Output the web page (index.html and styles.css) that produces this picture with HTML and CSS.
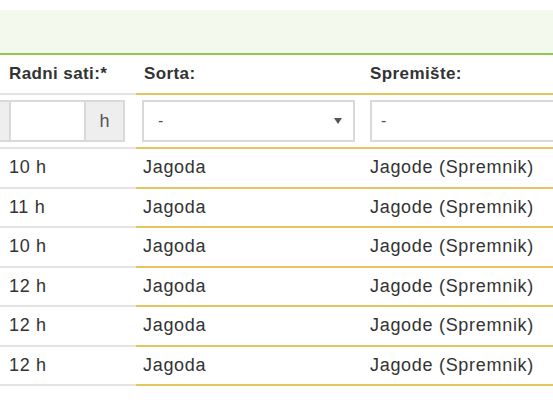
FILE: index.html
```html
<!DOCTYPE html>
<html>
<head>
<meta charset="utf-8">
<link rel="stylesheet" href="styles.css">
</head>
<body>
<div class="band"></div>
<div class="grid">
  <div class="cell c1 head">Radni sati:*</div>
  <div class="cell c2 head">Sorta:</div>
  <div class="cell c3 head">Spremište:</div>

  <div class="cell c1 inrow">
    <div class="group">
      <span class="addon left"></span>
      <span class="field"></span>
      <span class="addon unit">h</span>
    </div>
  </div>
  <div class="cell c2 inrow">
    <div class="select"><span>-</span><span class="caret"></span></div>
  </div>
  <div class="cell c3 inrow">
    <div class="text-input"><span>-</span></div>
  </div>

  <div class="cell c1 data">10 h</div><div class="cell c2 data">Jagoda</div><div class="cell c3 data">Jagode (Spremnik)</div>
  <div class="cell c1 data">11 h</div><div class="cell c2 data">Jagoda</div><div class="cell c3 data">Jagode (Spremnik)</div>
  <div class="cell c1 data">10 h</div><div class="cell c2 data">Jagoda</div><div class="cell c3 data">Jagode (Spremnik)</div>
  <div class="cell c1 data">12 h</div><div class="cell c2 data">Jagoda</div><div class="cell c3 data">Jagode (Spremnik)</div>
  <div class="cell c1 data">12 h</div><div class="cell c2 data">Jagoda</div><div class="cell c3 data">Jagode (Spremnik)</div>
  <div class="cell c1 data">12 h</div><div class="cell c2 data">Jagoda</div><div class="cell c3 data">Jagode (Spremnik)</div>
</div>
</body>
</html>
```

FILE: styles.css
```css
html, body {
  margin: 0;
  padding: 0;
  background: #ffffff;
  overflow: hidden;
}
body {
  font-family: "Liberation Sans", Arial, sans-serif;
  color: #333333;
  width: 553px;
  height: 400px;
}
.band {
  margin-top: 10px;
  height: 43px;
  background: #f3f9ec;
  border-bottom: 2px solid #8fca4c;
}
.grid {
  display: grid;
  grid-template-columns: 136px 226px 191px;
  width: 553px;
}
.cell {
  display: flex;
  align-items: center;
  border-bottom: 2px solid #e6c65c;
  overflow: hidden;
  white-space: nowrap;
}
.c1 {
  border-bottom-color: #e4e4e4;
  padding-left: 9px;
}
.c2 {
  padding-left: 7px;
}
.c3 {
  padding-left: 8px;
}
.head {
  height: 38px;
  font-weight: bold;
  font-size: 17px;
  letter-spacing: 0.4px;
}
.inrow {
  height: 52px;
}
.data {
  height: 37.5px;
  font-size: 18px;
  letter-spacing: 0.7px;
}
.c2.head { padding-left: 8px; }
.c2.data { padding-left: 7px; }

.group {
  display: flex;
  height: 42px;
  margin-left: -20px;
}
.addon {
  box-sizing: border-box;
  background: #eeeeee;
  border: 2px solid #d9d9d9;
  display: flex;
  align-items: center;
  justify-content: center;
  font-size: 18px;
  color: #555555;
}
.addon.left {
  width: 22px;
}
.field {
  box-sizing: border-box;
  width: 73px;
  border: 2px solid #d9d9d9;
  border-left: none;
  border-right: none;
  background: #ffffff;
}
.addon.unit {
  width: 41px;
}
.inrow.c2 { padding-left: 6px; }
.select {
  box-sizing: border-box;
  width: 213px;
  height: 42px;
  border: 2px solid #d9d9d9;
  display: flex;
  align-items: center;
  justify-content: space-between;
  padding: 0 11px 0 14px;
  font-size: 16px;
  color: #555555;
}
.caret {
  width: 0;
  height: 0;
  border-left: 4px solid transparent;
  border-right: 4px solid transparent;
  border-top: 6px solid #555555;
}
.text-input {
  box-sizing: border-box;
  width: 240px;
  height: 42px;
  border: 2px solid #d9d9d9;
  border-right: none;
  display: flex;
  align-items: center;
  padding-left: 9px;
  font-size: 16px;
  color: #555555;
}
```
